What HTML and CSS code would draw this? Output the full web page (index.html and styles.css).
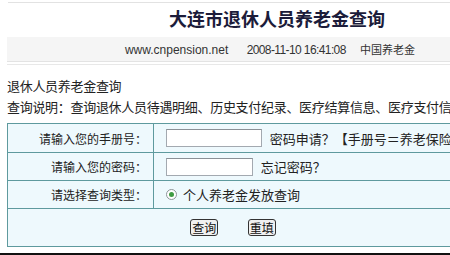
FILE: index.html
```html
<!DOCTYPE html>
<html lang="zh-CN">
<head>
    <meta charset="UTF-8">
    <meta name="viewport" content="width=device-width, initial-scale=1.0">
    <link rel="stylesheet" href="styles.css">
    <title>大连市退休人员养老金查询</title>
</head>
<body>

    <div class="page">
        <div class="top-line"></div>
        <div class="header">
            <h1 class="title">大连市退休人员养老金查询</h1>
            <div class="date-bar">
                <span>www.cnpension.net</span>
                <span class="date">2008-11-10 16:41:08</span>
                <span class="site-cn">中国养老金</span>
            </div>
        </div>

        <div class="intro">
            <p>退休人员养老金查询</p>
            <p>查询说明：查询退休人员待遇明细、历史支付纪录、医疗结算信息、医疗支付信息</p>
        </div>

        <form class="query-form" onsubmit="return false;">
            <table class="query-table">
                <colgroup>
                    <col class="label-col">
                    <col>
                </colgroup>
                <tr class="row-first">
                    <td class="label">请输入您的手册号：</td>
                    <td class="field">
                        <input type="text" class="input-book">
                        <span class="hint">密码申请？【手册号＝养老保险号】</span>
                    </td>
                </tr>
                <tr class="row-mid">
                    <td class="label">请输入您的密码：</td>
                    <td class="field">
                        <input type="password" class="input-pass">
                        <span class="hint">忘记密码？</span>
                    </td>
                </tr>
                <tr class="row-mid">
                    <td class="label">请选择查询类型：</td>
                    <td class="field">
                        <label class="radio-line"><span class="radio"></span>个人养老金发放查询</label>
                    </td>
                </tr>
                <tr class="row-buttons">
                    <td colspan="2" class="buttons">
                        <button type="submit">查询</button>
                        <button type="reset">重填</button>
                    </td>
                </tr>
            </table>
        </form>
    </div>

    <div class="bottom-line"></div>

</body>
</html>
```

FILE: styles.css
```css
html, body {
    overflow: hidden;
}

body {
    margin: 0;
    background-color: #ffffff;
    color: #222;
    font-family: "Liberation Sans", "Noto Sans CJK SC", sans-serif;
    font-size: 13px;
}

.page {
    margin-left: 7px;
}

.top-line {
    height: 1px;
    margin: 2px 0 0 1px;
    width: 540px;
    background-color: #e2e2e2;
}

.header {
    width: 540px;
}

.title {
    margin: 0;
    height: 34px;
    line-height: 34px;
    text-align: center;
    font-size: 18px;
    font-weight: bold;
    color: #1c1c3a;
}

.date-bar {
    height: 24px;
    line-height: 26px;
    padding-right: 14px;
    text-align: center;
    font-size: 12px;
    color: #333;
    background-color: #f5f5f5;
    border-bottom: 1px solid #e3e3e3;
    box-shadow: 0 2px 0 #fff, 0 3px 0 #e8e8e8; /* double line under the bar */
}

.date-bar .date {
    margin-left: 15px;
    letter-spacing: -0.6px;
}

.date-bar .site-cn {
    margin-left: 11px;
    font-size: 11px;
}

.intro {
    margin-top: 14px;
}

.intro p {
    margin: 0;
    height: 21px;
    line-height: 21px;
    white-space: nowrap;
    letter-spacing: -0.3px;
}

.query-form {
    margin: 5px 0 0 0;
}

.query-table {
    border-collapse: collapse;
    table-layout: fixed;
    width: 452px;
    background-color: #eef9fd;
}

.label-col {
    width: 146px;
}

.query-table td {
    border: 1px solid #5e9a9e;
    padding: 0;
    font-size: 13px;
    white-space: nowrap;
    overflow: visible;
}

.row-first td {
    height: 28px;
}

.row-mid td {
    height: 27px;
}

.row-buttons td {
    height: 37px;
}

.query-table .label {
    text-align: right;
    padding-right: 6px;
    font-size: 12px;
}

.query-table .field {
    padding-left: 12px;
}

.field input {
    box-sizing: border-box;
    height: 18px;
    margin: 0;
    padding: 0 2px;
    border: 1px solid #a3a9b0;
    border-top-color: #8b9096;
    background-color: #fff;
    vertical-align: middle;
}

.input-book {
    width: 96px;
}

.input-pass {
    width: 87px;
}

.hint {
    margin-left: 4px;
    vertical-align: middle;
}

.radio-line {
    display: inline-flex;
    align-items: center;
}

.radio {
    position: relative;
    box-sizing: border-box;
    width: 11px;
    height: 11px;
    margin-right: 6px;
    border: 1px solid #8d9599;
    border-radius: 50%;
    background-color: #fff;
}

.radio::after {
    content: "";
    position: absolute;
    left: 2px;
    top: 2px;
    width: 5px;
    height: 5px;
    border-radius: 50%;
    background-color: #3f9b43;
}

.buttons {
    text-align: center;
}

.buttons button {
    box-sizing: border-box;
    height: 17px;
    padding: 0 1px;
    margin: 0 13px;
    font-family: "Noto Sans CJK SC", sans-serif;
    font-size: 12px;
    line-height: 14px;
    color: #111;
    background-color: #f0f0f0;
    border: 1px solid #333;
    border-radius: 3px;
    vertical-align: middle;
    cursor: pointer;
}

.bottom-line {
    margin-top: 6px;
    height: 2px;
    background-color: #111;
}
```
